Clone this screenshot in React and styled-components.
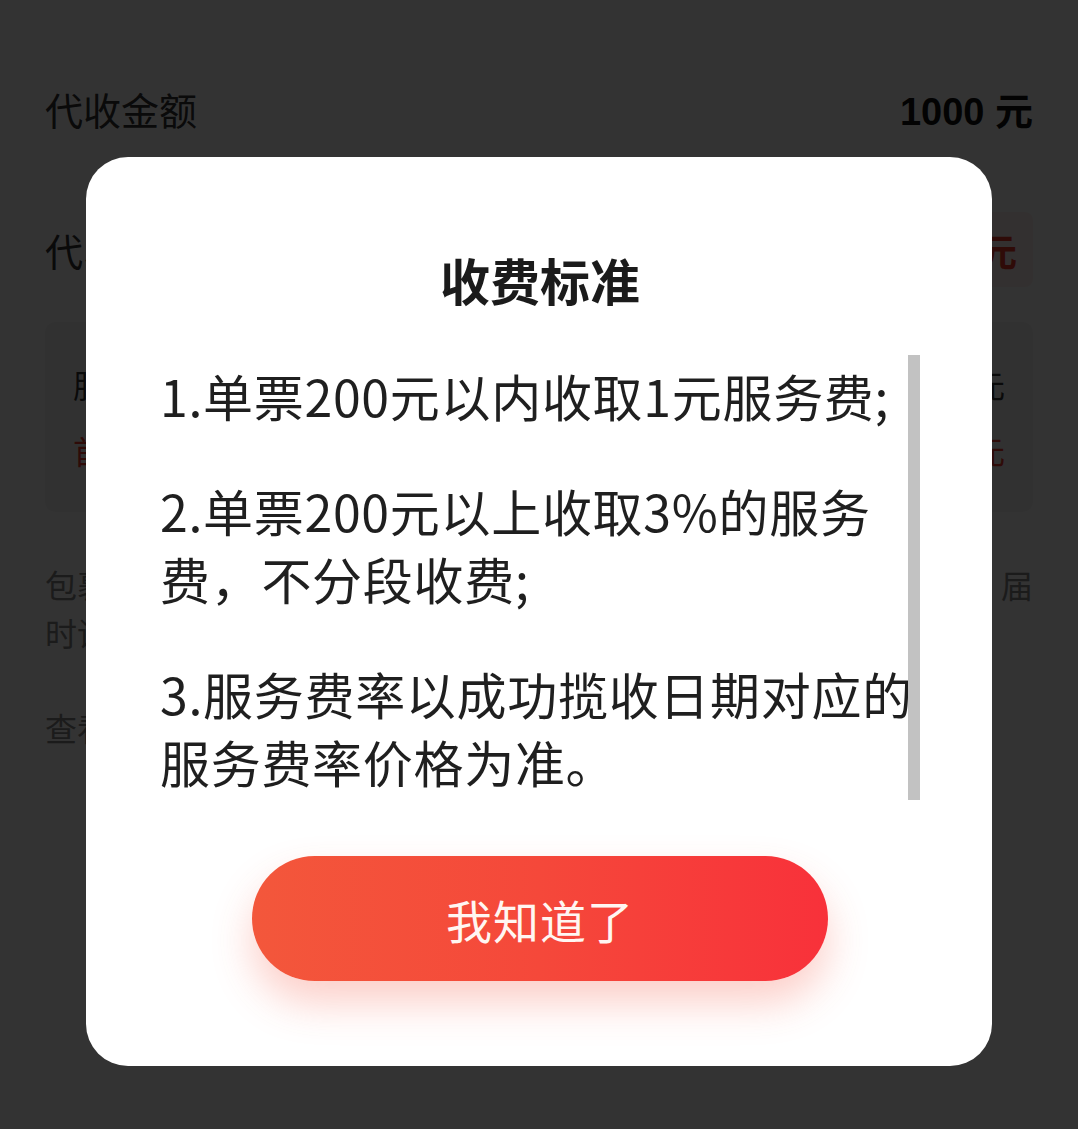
import React from 'react';
import styled, { createGlobalStyle } from 'styled-components';

const GlobalStyle = createGlobalStyle`
  html, body {
    margin: 0;
    padding: 0;
    background: #ffffff;
  }
  body {
    font-family: "Noto Sans CJK SC", "Noto Sans", sans-serif;
  }
`;

const Page = styled.div`
  position: relative;
  width: 1078px;
  min-height: 1129px;
  background: #ffffff;
  overflow: hidden;
`;

const Section = styled.div`
  padding: 0 45px;
`;

const Row = styled.div`
  display: flex;
  justify-content: space-between;
  align-items: center;
  height: ${p => p.$h || 140}px;
  font-size: 38px;
  color: #333;
`;

const Amount = styled.span`
  font-family: "Liberation Sans", "Noto Sans CJK SC", sans-serif;
  font-weight: 600;
  color: #111;
  font-size: 38px;
`;

const RedTag = styled.span`
  color: #e83a2c;
  font-weight: 600;
  background: #fff1ef;
  padding: 10px 16px;
  border-radius: 8px;
`;

const FeeBox = styled.div`
  margin-top: 40px;
  background: #f6f6f6;
  border-radius: 10px;
  padding: 18px 28px;
  height: 154px;
  display: flex;
  flex-direction: column;
  justify-content: center;
  gap: 20px;
`;

const FeeLine = styled.div`
  display: flex;
  justify-content: space-between;
  font-size: 32px;
  color: ${p => (p.$red ? '#e83a2c' : '#333')};
`;

const Note = styled.p`
  margin: 48px 0 0;
  font-size: 32px;
  line-height: 48px;
  color: #888;
  text-align: justify;
`;

const Link = styled.p`
  margin: 48px 0 0;
  font-size: 32px;
  color: #888;
`;

const Overlay = styled.div`
  position: absolute;
  inset: 0;
  background: rgba(0, 0, 0, 0.8);
  display: flex;
  flex-direction: column;
  align-items: center;
  padding-top: 157px;
`;

const Dialog = styled.div`
  width: 906px;
  box-sizing: border-box;
  background: #ffffff;
  border-radius: 42px;
  padding: 92px 72px 85px 74px;
  display: flex;
  flex-direction: column;
  align-items: center;
`;

const Title = styled.h2`
  margin: 0;
  font-size: 50px;
  line-height: 60px;
  font-weight: 700;
  color: #1b1b1b;
`;

const ScrollArea = styled.div`
  position: relative;
  margin-top: 46px;
  width: 100%;
  height: 445px;
  padding-top: 6px;
  box-sizing: border-box;
`;

const Thumb = styled.div`
  position: absolute;
  right: 0;
  top: 0;
  width: 12px;
  height: 100%;
  background: #c2c2c2;
`;

const Rule = styled.p`
  margin: 0 0 47px;
  padding-right: 4px;
  font-size: 50px;
  line-height: 68px;
  letter-spacing: 0.7px;
  color: #1f1f1f;
`;

const ConfirmButton = styled.button`
  margin-top: 56px;
  width: 576px;
  height: 125px;
  border: 0;
  border-radius: 63px;
  background: linear-gradient(90deg, #f3573b 0%, #f5483a 50%, #f8313a 100%);
  box-shadow: 0 22px 40px rgba(244, 82, 60, 0.28);
  color: #fff6f2;
  font-family: "Noto Sans CJK SC", sans-serif;
  font-size: 46px;
  letter-spacing: 1px;
  cursor: pointer;
`;

const rules = [
  '1.单票200元以内收取1元服务费;',
  '2.单票200元以上收取3%的服务费，不分段收费;',
  '3.服务费率以成功揽收日期对应的服务费率价格为准。',
];

export default function App() {
  return (
    <>
      <GlobalStyle />
      <Page>
        <Section>
          <Row $h={216}>
            <span>代收金额</span>
            <Amount>1000 元</Amount>
          </Row>
          <Row $h={66}>
            <span>代收服务费</span>
            <RedTag>30 元</RedTag>
          </Row>
          <FeeBox>
            <FeeLine>
              <span>服务费</span>
              <span>30 元</span>
            </FeeLine>
            <FeeLine $red>
              <span>首单优惠</span>
              <span>-0 元</span>
            </FeeLine>
          </FeeBox>
          <Note>
            包裹成功签收后，代收货款将在7个工作日内返还至您的收款账户，届时请注意查收。
          </Note>
          <Link>查看收费标准</Link>
        </Section>

        <Overlay>
          <Dialog>
            <Title>收费标准</Title>
            <ScrollArea>
              {rules.map(r => (
                <Rule key={r}>{r}</Rule>
              ))}
              <Thumb />
            </ScrollArea>
            <ConfirmButton>我知道了</ConfirmButton>
          </Dialog>
        </Overlay>
      </Page>
    </>
  );
}
